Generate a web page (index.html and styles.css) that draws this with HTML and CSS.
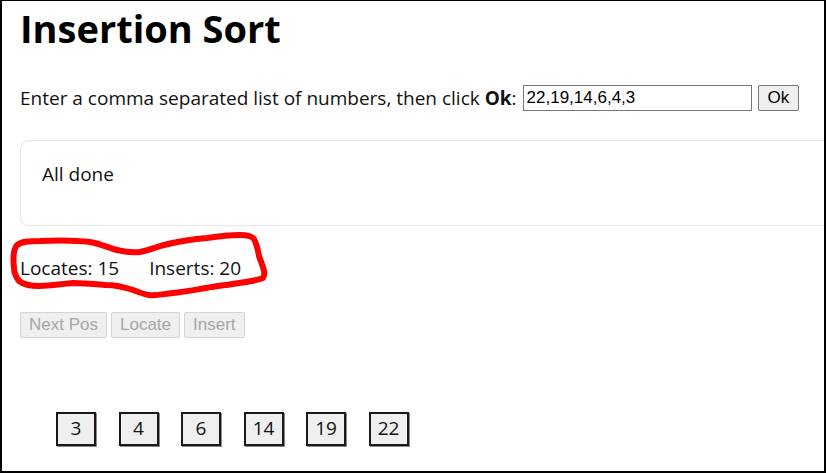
FILE: index.html
```html
<!DOCTYPE html>
<html>
<head>
<meta charset="utf-8">
<title>Insertion Sort</title>
<link rel="stylesheet" href="styles.css">
</head>
<body>
<div class="frame">
  <h1 class="title">Insertion Sort</h1>
  <div class="entry">
    <span>Enter a comma separated list of numbers, then click <b>Ok</b>:</span>
    <input class="list-input" type="text" value="22,19,14,6,4,3">
    <button class="ok-btn">Ok</button>
  </div>
  <div class="status">All done</div>
  <div class="stats">
    <span>Locates: 15</span>
    <span>Inserts: 20</span>
  </div>
  <div class="controls">
    <button class="ctl" disabled>Next Pos</button>
    <button class="ctl" disabled>Locate</button>
    <button class="ctl" disabled>Insert</button>
  </div>
  <div class="cells">
    <div class="cell">3</div>
    <div class="cell">4</div>
    <div class="cell">6</div>
    <div class="cell">14</div>
    <div class="cell">19</div>
    <div class="cell">22</div>
  </div>
  <svg class="scribble" width="827" height="473" viewBox="0 0 827 473">
    <path d="M17 245 C22 241 32 241 40 241 C60 240 74 240 90 242 C102 244 108 248 117 250 C126 252 132 253 140 252 C150 250 156 247 164 245 C180 241 192 239 207 238 C220 236 230 235 240 235 C248 235 252 236 254 239 C257 245 258 250 259 256 C261 262 263 266 264 271 C265 274 264 276 263 278 C255 281 247 282 239 283 C227 285 217 286 206 288 C194 290 184 292 173 293 C163 294 156 296 149 295 C143 294 138 292 133 290 C124 287 115 285 106 285 C94 284 83 283 73 283 C61 284 50 286 39 286 C30 286 23 284 19 281 C16 277 14 273 14 268 C13 259 13 250 17 245 Z" />
  </svg>
</div>
</body>
</html>
```
FILE: styles.css
```css
html, body {
  margin: 0;
  padding: 0;
  background: #fff;
}

.frame {
  position: relative;
  width: 826px;
  height: 473px;
  box-sizing: border-box;
  border-top: 1px solid #000;
  border-left: 2px solid #000;
  border-right: 2px solid #000;
  border-bottom: 2px solid #000;
  overflow: hidden;
  padding-left: 18px;
  font-family: "Open Sans", "Noto Sans", sans-serif;
  font-size: 19px;
  color: #111;
}

.title {
  margin: 0;
  padding-top: 4px;
  font-size: 38px;
  font-weight: 700;
  line-height: 46px;
  color: #000;
}

.entry {
  display: flex;
  align-items: center;
  margin-top: 34px;
  height: 26px;
  white-space: nowrap;
}

.entry b {
  font-weight: 700;
}

.list-input {
  margin-left: 6px;
  width: 229px;
  height: 26px;
  box-sizing: border-box;
  border: 1px solid #767676;
  border-radius: 0;
  padding: 1px 3px;
  font-family: "Liberation Sans", Arial, sans-serif;
  font-size: 17px;
  color: #000;
}

.ok-btn {
  margin-left: 6px;
  height: 26px;
  box-sizing: border-box;
  padding: 0 9px;
  border: 1px solid #767676;
  border-radius: 2px;
  background: #efefef;
  font-family: "Liberation Sans", Arial, sans-serif;
  font-size: 17px;
  color: #000;
}

.status {
  margin-top: 29px;
  width: 840px;
  height: 86px;
  box-sizing: border-box;
  border: 1px solid #e6e6e6;
  border-radius: 9px;
  padding: 19px 0 0 21px;
  line-height: 28px;
}

.stats {
  display: flex;
  gap: 30px;
  margin-top: 28px;
  line-height: 28px;
}

.controls {
  display: flex;
  gap: 4px;
  margin-top: 30px;
}

.ctl {
  height: 26px;
  box-sizing: border-box;
  padding: 0 8px;
  border: 1px solid #d4d4d4;
  border-radius: 2px;
  background: #efefef;
  color: #a6a6a6;
  font-family: "Liberation Sans", Arial, sans-serif;
  font-size: 17px;
}

.cells {
  display: flex;
  gap: 22.5px;
  margin-top: 74px;
  padding-left: 36px;
}

.cell {
  width: 40px;
  height: 34px;
  box-sizing: border-box;
  border: 2px solid #1a1a1a;
  box-shadow: 1px 1px 0 #8a8a8a;
  background: #efefef;
  text-align: center;
  line-height: 29px;
  font-size: 19px;
  color: #111;
}

.scribble {
  position: absolute;
  left: -2px;
  top: -1px;
  pointer-events: none;
}

.scribble path {
  fill: none;
  stroke: #ff0000;
  stroke-width: 6;
  stroke-linejoin: round;
}
```
